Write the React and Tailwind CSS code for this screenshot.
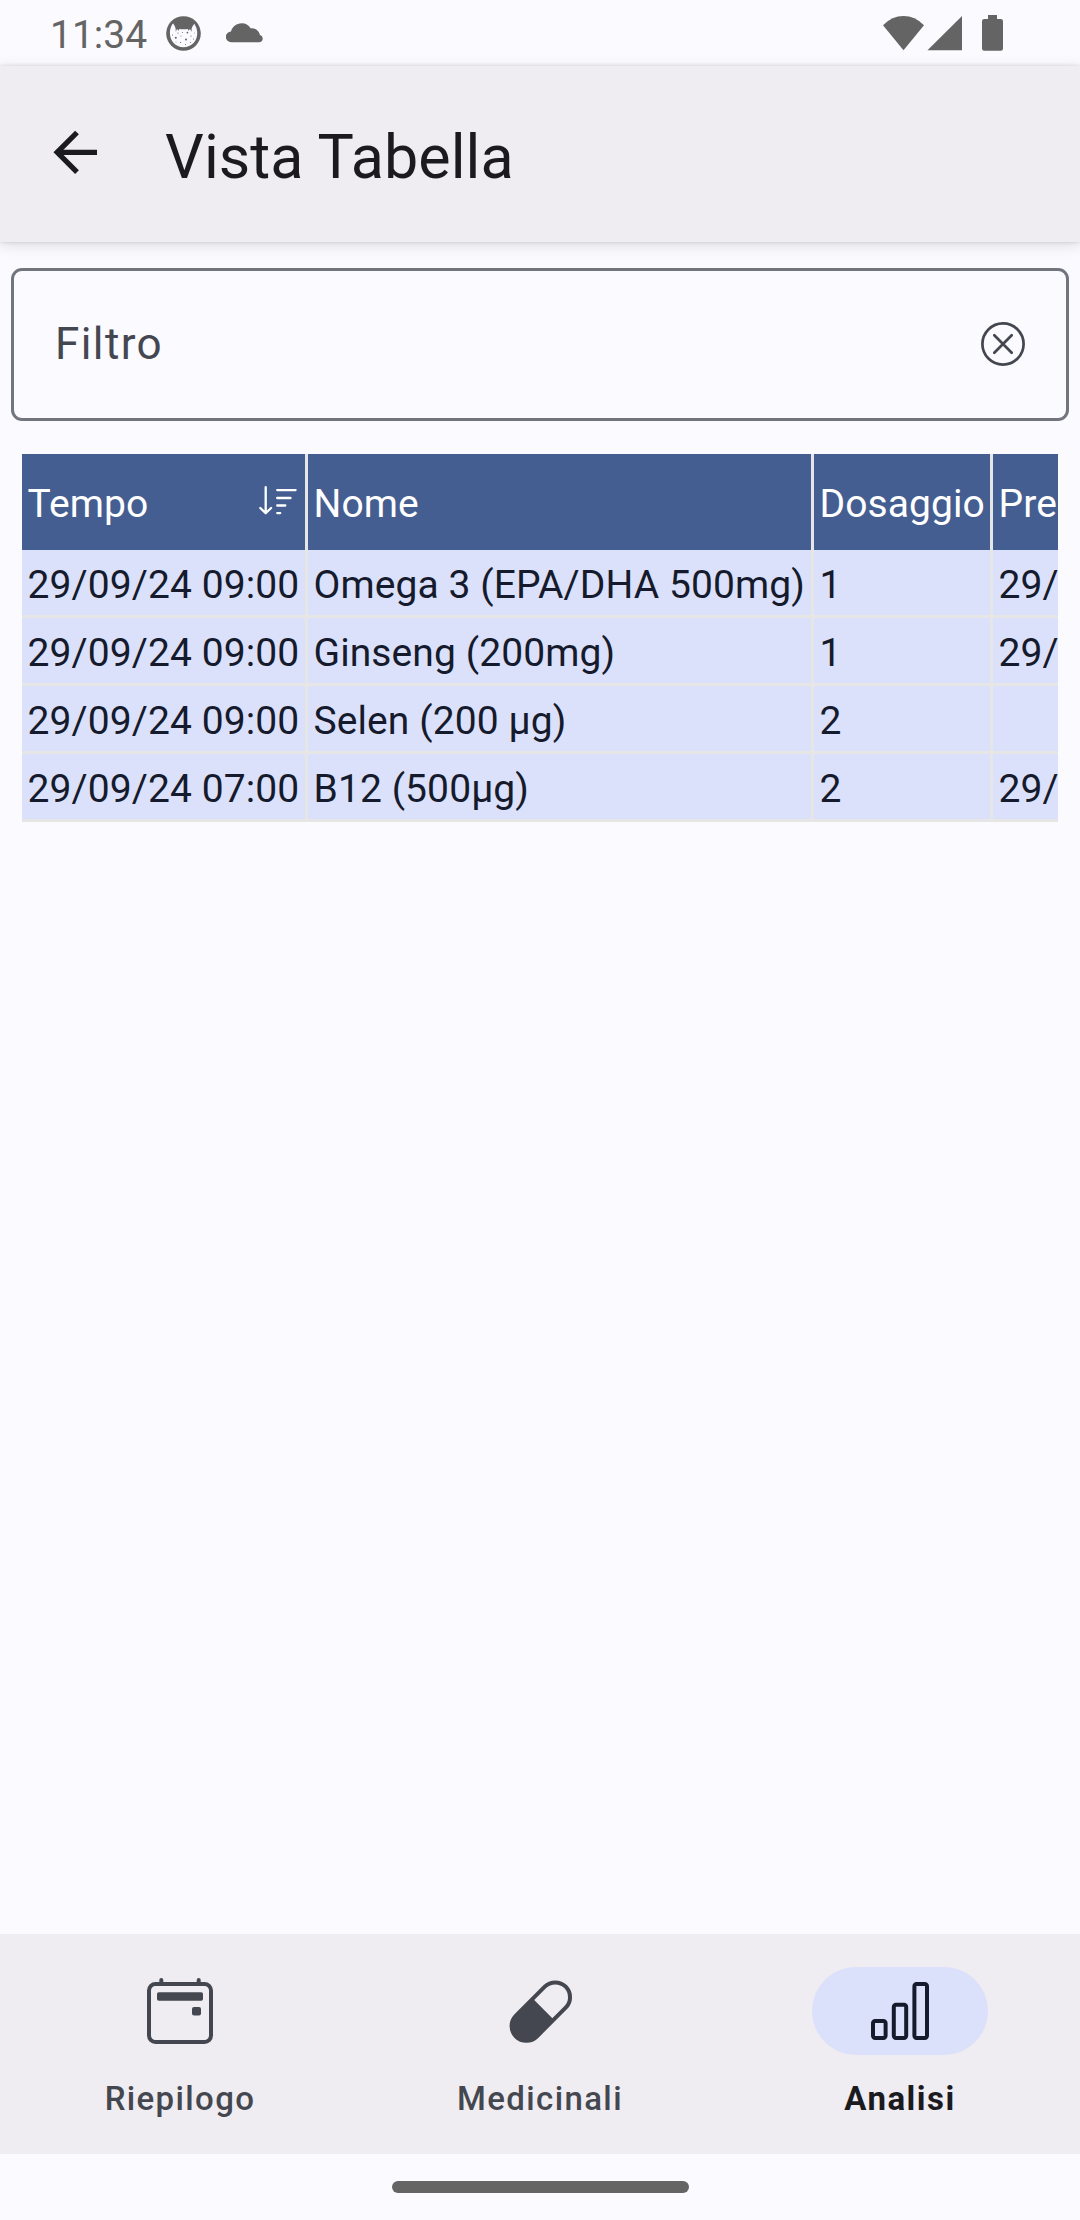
const rows = [
  ["29/09/24 09:00", "Omega 3 (EPA/DHA 500mg)", "1", "29/"],
  ["29/09/24 09:00", "Ginseng (200mg)", "1", "29/"],
  ["29/09/24 09:00", "Selen (200 µg)", "2", ""],
  ["29/09/24 07:00", "B12 (500µg)", "2", "29/"],
];

const GRID = "grid grid-cols-[286px_506px_179px_65px]";

function StatusBar() {
  return (
    <div className="flex h-[66px] shrink-0 items-center text-[#646464]">
      <span className="ml-[50px] w-[116px] pt-[3px] text-[39px] leading-[44px]">11:34</span>
      <svg className="mt-px h-[36px] w-[36px]" viewBox="0 0 36 36">
        <circle cx="17.5" cy="17.5" r="17.3" fill="#646464" />
        <path d="M5.2 10.5 Q6 8 7.2 7.6 Q9 10 9.6 12.5 L9.8 15.8 L11 13 L12.8 14.8 L13.2 12.9 Q17.5 13.8 21.8 12.9 L22.4 14.8 L24 13 L25.6 15.8 L25.6 12.5 Q26.5 9.8 28.4 7.8 Q30.8 11.5 31.2 16 C31.8 25 25.5 31.2 17.5 31.2 C9.5 31.2 3.6 25 3.9 16 Q4 13 5.2 10.5 Z" fill="#fafaff" />
        <g fill="#646464">
          <circle cx="9.8" cy="21.8" r="1" />
          <circle cx="20" cy="23.4" r="1" />
          <circle cx="21.4" cy="16.6" r="0.9" />
          <circle cx="12" cy="17" r="0.6" />
          <circle cx="6.5" cy="19" r="0.5" />
          <circle cx="15" cy="20" r="0.5" />
          <circle cx="25" cy="20" r="0.6" />
          <circle cx="27.5" cy="23" r="0.5" />
          <circle cx="14.5" cy="26.5" r="0.6" />
          <circle cx="19.5" cy="28.4" r="0.5" />
          <circle cx="10" cy="26" r="0.4" />
          <circle cx="24.5" cy="26.5" r="0.5" />
          <circle cx="28.5" cy="17" r="0.4" />
          <circle cx="16.5" cy="16.4" r="0.5" />
        </g>
      </svg>
      <svg className="mt-[-2px] ml-[24px] h-[22px] w-[39px]" viewBox="0 0 39 22" fill="#646464">
        <path d="M5.3 21.2 A5.3 5.3 0 0 1 5 10.6 A10.8 10.8 0 0 1 24.6 7.2 A8.6 8.6 0 0 1 34 14 A3.7 3.7 0 0 1 33.7 21.2 Z" />
      </svg>
      <svg className="mt-[-1px] ml-auto h-[36px] w-[79px]" viewBox="0 0 79 36" fill="#646464">
        <path d="M0 10.2 Q9 1 20.5 1 Q32 1 41 10.2 L20.5 35.2 Z" />
        <path d="M44.5 35.3 L79 1 V35.3 Z" />
      </svg>
      <svg className="mr-[77px] ml-[20px] h-[36px] w-[21px]" viewBox="0 0 21 36" fill="#646464">
        <path d="M6 0 H15 V4 H18.8 A2.2 2.2 0 0 1 21 6.2 V33.6 A2.2 2.2 0 0 1 18.8 35.8 H2.2 A2.2 2.2 0 0 1 0 33.6 V6.2 A2.2 2.2 0 0 1 2.2 4 H6 Z" />
      </svg>
    </div>
  );
}

function AppBar() {
  return (
    <header className="flex h-[176px] shrink-0 items-center bg-[#efedf1] shadow-[0_3px_14px_rgba(0,0,0,0.12),0_0_4px_rgba(0,0,0,0.14)]">
      <svg className="mt-[-4px] ml-[53px] h-[44px] w-[44px]" viewBox="0 0 44 44" fill="none" stroke="#1b1b1f" strokeWidth="5.3">
        <path d="M44 22.3 H5" />
        <path d="M24 2.5 L4.2 22.3 L24 42.1" />
      </svg>
      <h1 className="ml-[68px] pt-[6px] text-[61px] leading-[72px] tracking-[0.06px] text-[#1b1b1f]">Vista Tabella</h1>
    </header>
  );
}

function SortIcon() {
  return (
    <svg className="mb-[5px] h-[29px] w-[38px]" viewBox="0 0 38 29" fill="none" stroke="#fff" strokeWidth="2.3" strokeLinecap="round" strokeLinejoin="round">
      <path d="M6.7 1.2 V27 M1.3 22 L6.7 27.3 L12.1 22" />
      <path d="M18.2 4.1 H36.6 M18.2 12 H31.5 M18.2 19.5 H26.3 M18.2 27.1 H21.2" />
    </svg>
  );
}

function HeadCell({ children }) {
  return (
    <div className="flex items-center border-r-3 border-[#e6e6e6] bg-[#445e91] pt-[2px] pr-[8px] pl-[5.5px] text-white last:border-r-0 last:pr-0">
      {children}
    </div>
  );
}

function Table() {
  return (
    <div className="mx-[22px] mt-[33px] text-[39px] leading-[46px] tracking-[0.09px] whitespace-nowrap">
      <div className={GRID + " h-[96px]"}>
        <HeadCell>
          <span className="grow pt-[2px]">Tempo</span>
          <SortIcon />
        </HeadCell>
        <HeadCell><span className="pt-[2px]">Nome</span></HeadCell>
        <HeadCell><span className="pt-[2px]">Dosaggio</span></HeadCell>
        <HeadCell><span className="pt-[2px]">Pre</span></HeadCell>
      </div>
      {rows.map((row, i) => (
        <div key={i} className={GRID + " h-[68px]"}>
          {row.map((cell, j) => (
            <div key={j} className="border-r-3 border-b-3 border-[#e6e6e6] bg-[#dce1fb] pt-[12px] pl-[5.5px] text-[#151b2c] last:border-r-0">
              {cell}
            </div>
          ))}
        </div>
      ))}
    </div>
  );
}

function CalendarIcon() {
  return (
    <svg className="h-[66px] w-[66px]" viewBox="0 0 66 66" fill="none" stroke="#44474f" strokeWidth="4">
      <rect x="2" y="6" width="62" height="58" rx="6.5" />
      <path d="M14.3 6 V2 M51.7 6 V2" strokeLinecap="round" />
      <rect x="10" y="14.2" width="46" height="8.6" rx="1.8" fill="#44474f" stroke="none" />
      <rect x="45" y="29" width="9" height="8.6" rx="2" fill="#44474f" stroke="none" />
    </svg>
  );
}

function PillIcon() {
  return (
    <svg className="h-[66px] w-[66px]" viewBox="0 0 66 66">
      <g transform="translate(33.8 33.6) rotate(-45)">
        <rect x="-35.2" y="-14.8" width="70.4" height="29.6" rx="14.8" fill="none" stroke="#44474f" strokeWidth="4" />
        <path d="M3.5 -16 H-20.4 A16 16 0 0 0 -20.4 16 H3.5 Z" fill="#44474f" />
      </g>
    </svg>
  );
}

function BarsIcon() {
  return (
    <svg className="h-[66px] w-[66px]" viewBox="0 0 66 66" fill="none" stroke="#151b2c" strokeWidth="4">
      <rect x="6" y="43" width="12.6" height="17" rx="2.2" />
      <rect x="26.8" y="26.8" width="12.4" height="33.2" rx="2.2" />
      <rect x="47.4" y="6" width="12.6" height="54" rx="2.2" />
    </svg>
  );
}

function NavItem({ icon, label, active }) {
  return (
    <div className="flex flex-1 flex-col items-center pt-[33px]">
      <div className={"flex h-[88px] w-[176px] items-center justify-center rounded-full " + (active ? "bg-[#dce1fb]" : "")}>
        {icon}
      </div>
      <span className={"mt-[22px] text-[33px] leading-[44px] " + (active ? "font-bold tracking-[1.5px] text-[#1b1b1f]" : "font-medium tracking-[1.37px] text-[#44474f]")}>
        {label}
      </span>
    </div>
  );
}

export default function App() {
  return (
    <div className="flex h-[2220px] w-[1080px] flex-col overflow-hidden bg-[#fafaff] font-['Roboto',sans-serif]">
      <StatusBar />
      <AppBar />
      <div className="mx-[11px] mt-[26px] flex h-[153px] shrink-0 items-center justify-between rounded-[11px] border-3 border-[#72757e] pr-[41px] pb-px pl-[41px]">
        <span className="text-[44px] leading-[52px] tracking-[1.4px] text-[#44474f]">Filtro</span>
        <svg className="h-[44px] w-[44px]" viewBox="0 0 44 44" fill="none" stroke="#44474f" strokeWidth="2.7" strokeLinecap="round">
          <circle cx="22" cy="22" r="20.6" />
          <path d="M13.3 13.3 L30.7 30.7 M30.7 13.3 L13.3 30.7" />
        </svg>
      </div>
      <Table />
      <nav className="mt-auto flex h-[220px] shrink-0 bg-[#efedf1]">
        <NavItem icon={<CalendarIcon />} label="Riepilogo" />
        <NavItem icon={<PillIcon />} label="Medicinali" />
        <NavItem icon={<BarsIcon />} label="Analisi" active />
      </nav>
      <div className="flex h-[66px] shrink-0 justify-center pt-[27px]">
        <div className="h-[12px] w-[297px] rounded-full bg-[#646464]" />
      </div>
    </div>
  );
}
